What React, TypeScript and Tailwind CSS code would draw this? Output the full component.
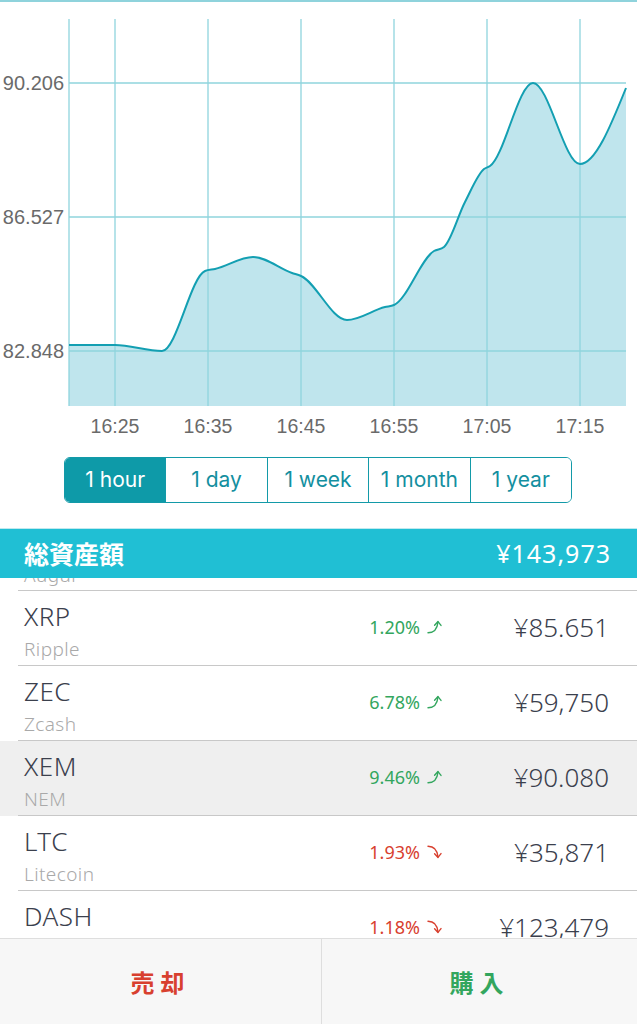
import React from "react";

type Pt = [number, number];

function monotonePath(pts: Pt[]): string {
  const n = pts.length;
  const h: number[] = [];
  const s: number[] = [];
  for (let i = 0; i < n - 1; i++) {
    h.push(pts[i + 1][0] - pts[i][0]);
    s.push((pts[i + 1][1] - pts[i][1]) / h[i]);
  }
  const sign = (v: number) => (v < 0 ? -1 : 1);
  const m: number[] = new Array(n).fill(0);
  for (let i = 1; i < n - 1; i++) {
    const p = (s[i - 1] * h[i] + s[i] * h[i - 1]) / (h[i - 1] + h[i]);
    m[i] =
      (sign(s[i - 1]) + sign(s[i])) *
        Math.min(Math.abs(s[i - 1]), Math.abs(s[i]), 0.5 * Math.abs(p)) || 0;
  }
  m[0] = (3 * s[0] - m[1]) / 2;
  m[n - 1] = (3 * s[n - 2] - m[n - 2]) / 2;
  let d = `M${pts[0][0]},${pts[0][1]}`;
  for (let i = 0; i < n - 1; i++) {
    const [x0, y0] = pts[i];
    const [x1, y1] = pts[i + 1];
    const dx = h[i] / 3;
    d += ` C${x0 + dx},${y0 + m[i] * dx} ${x1 - dx},${y1 - m[i + 1] * dx} ${x1},${y1}`;
  }
  return d;
}

const points: Pt[] = [
  [69, 343],
  [115, 343],
  [162, 349],
  [205, 269],
  [215, 267],
  [253, 255],
  [292, 271],
  [301, 274],
  [347, 318],
  [385, 305],
  [394, 303],
  [434, 249],
  [444, 245],
  [465, 200],
  [484, 167],
  [490, 164],
  [533, 81],
  [580, 162],
  [626, 86],
];

function Chart() {
  const line = monotonePath(points);
  const area = `${line} L626,404 L69,404 Z`;
  const vx = [69, 115, 208, 301, 394, 487, 580];
  const hy = [81, 215, 349];
  const yLabels: [string, number][] = [
    ["90.206", 81],
    ["86.527", 215],
    ["82.848", 349],
  ];
  const xLabels: [string, number][] = [
    ["16:25", 115],
    ["16:35", 208],
    ["16:45", 301],
    ["16:55", 394],
    ["17:05", 487],
    ["17:15", 580],
  ];
  return (
    <svg width="637" height="445" viewBox="0 0 637 445" className="block">
      <path d={area} fill="#bfe5ed" />
      {vx.map((x) => (
        <line key={x} x1={x} y1={17} x2={x} y2={404} stroke="#8fd4dd" strokeWidth={1.3} />
      ))}
      {hy.map((y) => (
        <line key={y} x1={69} y1={y} x2={626} y2={y} stroke="#8fd4dd" strokeWidth={1.3} />
      ))}
      <path d={line} fill="none" stroke="#139fb2" strokeWidth={2} />
      {yLabels.map(([t, y]) => (
        <text
          key={t}
          x={64}
          y={y + 7}
          textAnchor="end"
          fontSize={20}
          fill="#6a6a6a"
          fontFamily="'Liberation Sans', Arial, sans-serif"
        >
          {t}
        </text>
      ))}
      {xLabels.map(([t, x]) => (
        <text
          key={t}
          x={x}
          y={431}
          textAnchor="middle"
          fontSize={19.5}
          fill="#6a6a6a"
          fontFamily="'Liberation Sans', Arial, sans-serif"
        >
          {t}
        </text>
      ))}
    </svg>
  );
}

function TrendArrow({ up }: { up: boolean }) {
  return (
    <svg width="15" height="14" viewBox="0 0 15 14" fill="none" stroke="currentColor" strokeWidth={1.4} strokeLinecap="round" strokeLinejoin="round">
      {up ? (
        <>
          <path d="M1 12.8 C7 12.8 10.2 10 11 2" />
          <path d="M7.6 5.2 L11 1.6 L14 5.4" />
        </>
      ) : (
        <>
          <path d="M1 1.2 C7 1.2 10.2 4 11 12" />
          <path d="M7.6 8.8 L11 12.4 L14 8.6" />
        </>
      )}
    </svg>
  );
}

const ranges = ["1 hour", "1 day", "1 week", "1 month", "1 year"];

type Row = {
  sym: string;
  name: string;
  pct: string;
  up: boolean;
  price: string;
  hl?: boolean;
};

const rows: Row[] = [
  { sym: "XRP", name: "Ripple", pct: "1.20%", up: true, price: "¥85.651" },
  { sym: "ZEC", name: "Zcash", pct: "6.78%", up: true, price: "¥59,750" },
  { sym: "XEM", name: "NEM", pct: "9.46%", up: true, price: "¥90.080", hl: true },
  { sym: "LTC", name: "Litecoin", pct: "1.93%", up: false, price: "¥35,871" },
  { sym: "DASH", name: "Dash", pct: "1.18%", up: false, price: "¥123,479" },
];

const latin = "font-['Noto_Sans','Noto_Sans_CJK_JP',sans-serif]";

function CoinRow({ r }: { r: Row }) {
  return (
    <div className={`${r.hl ? "bg-[#efefef]" : "bg-white"} shrink-0`}>
      <div className="flex h-[74px] items-start">
        <div className="pl-6 pt-[10px] flex flex-col">
          <span className={`${latin} text-[26px] leading-[30px] tracking-[0.5px] text-[#3b404d] font-light`}>{r.sym}</span>
          <span className={`${latin} text-[19px] leading-[24px] tracking-[0.4px] mt-[6px] text-[#a9a9a9] font-light`}>{r.name}</span>
        </div>
        <div
          className={`ml-auto pt-[24px] flex items-center gap-[7px] ${latin} text-[18px] leading-[24px] ${
            r.up ? "text-[#33a65e]" : "text-[#d8402f]"
          }`}
        >
          <span>{r.pct}</span>
          <TrendArrow up={r.up} />
        </div>
        <div className={`w-[195px] pr-[28px] pt-[22px] text-right ${latin} text-[26px] leading-[28px] text-[#3b404d] font-light`}>
          {r.price}
        </div>
      </div>
      <div className="ml-[18px] h-px bg-[#c8c8c8]" />
    </div>
  );
}

export default function App() {
  return (
    <div className="w-[637px] h-[1024px] bg-white flex flex-col overflow-hidden border-t-2 border-[#8fd3dc]">
      <Chart />
      <div className="mt-[10px] ml-[64px] w-[508px] h-[46px] flex rounded-[6px] border-[1.5px] border-[#139aa8] overflow-hidden">
        {ranges.map((t, i) => (
          <div
            key={t}
            className={`flex-1 flex items-center justify-center text-[21px] font-['Inter',sans-serif] ${
              i === 0 ? "bg-[#0e9aa8] text-white" : "bg-white text-[#148f9f]"
            } ${i > 0 ? "border-l-[1.5px] border-[#139aa8]" : ""}`}
          >
            {t}
          </div>
        ))}
      </div>
      <div className="mt-[25px] border-t border-[#bfe9ef]" />
      <div className="h-[49px] bg-[#20bfd4] flex items-center justify-between pl-6 pr-[26px] shrink-0">
        <span className="font-['Noto_Sans_CJK_JP',sans-serif] font-bold text-[25px] text-white">総資産額</span>
        <span className={`${latin} text-[25px] text-white tracking-[1px]`}>¥143,973</span>
      </div>
      <div className="flex-1 overflow-hidden flex flex-col">
        <div className="h-[12px] overflow-hidden relative shrink-0">
          <div className={`pl-6 ${latin} text-[19px] leading-[24px] tracking-[0.4px] text-[#a9a9a9] font-light -mt-[15px]`}>Augur</div>
        </div>
        <div className="ml-[18px] h-px bg-[#c8c8c8] shrink-0" />
        {rows.map((r) => (
          <CoinRow key={r.sym} r={r} />
        ))}
      </div>
      <div className="h-[86px] shrink-0 bg-[#f7f7f7] border-t border-[#dedede] flex">
        <div className="w-[322px] border-r border-[#dedede] flex items-center justify-center">
          <span className="font-['Noto_Sans_CJK_JP',sans-serif] font-bold text-[24px] tracking-[6px] text-[#d8402f]">売却</span>
        </div>
        <div className="flex-1 flex items-center justify-center">
          <span className="font-['Noto_Sans_CJK_JP',sans-serif] font-bold text-[24px] tracking-[6px] text-[#33a65e]">購入</span>
        </div>
      </div>
    </div>
  );
}
